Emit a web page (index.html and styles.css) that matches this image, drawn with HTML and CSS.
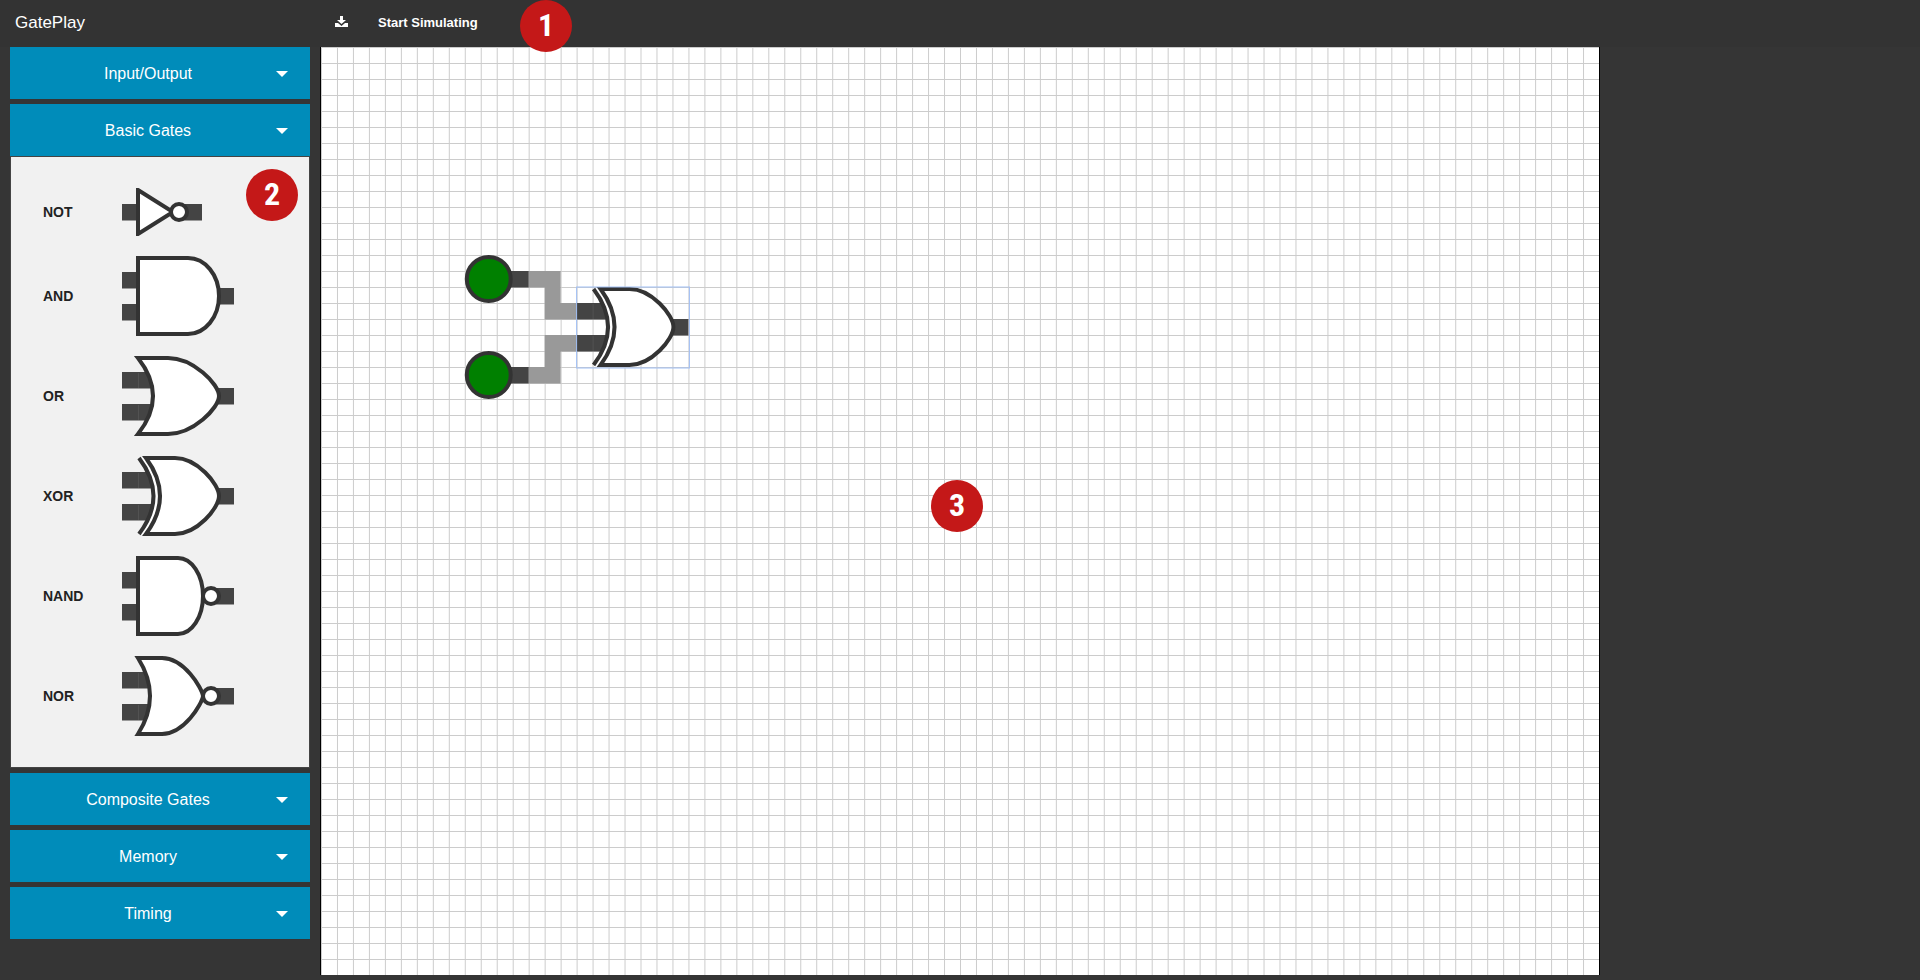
FILE: index.html
```html
<!DOCTYPE html>
<html lang="en">
<head>
<meta charset="utf-8">
<title>GatePlay</title>
<link rel="stylesheet" href="styles.css">
</head>
<body>
<svg class="defs" width="0" height="0" aria-hidden="true">
  <defs>
    <g id="pins-in"><path class="pin" d="M0 16H17V32.500H0zM0 48H17V64.500H0z"/></g>
    <g id="pins-in-long"><path class="pin" d="M0 16H32V32.500H0zM0 48H32V64.500H0z"/><path class="seam" d="M16.500 17V32M16.500 49V64"/></g>
    <g id="gate-xor">
      <use href="#pins-in-long"/>
      <path class="pin" d="M96 32H112V48.500H96z"/>
      <path class="gap" d="M17 2Q46 40 17 78H25Q52 40 25 2z"/>
      <path class="line" d="M17 2Q46 40 17 78"/>
      <path class="body" d="M24 2H53C75 2 97 28 97 40S75 78 53 78H24Q52 40 24 2z"/>
    </g>
  </defs>
</svg>

<header class="topbar">
  <a class="brand" href="#">GatePlay</a>
  <nav class="tools">
    <button class="tool" type="button" aria-label="Download">
      <svg width="13" height="11" viewBox="0 0 13 11"><path fill="#fff" d="M5 0h3v4h3L6.500 8 2 4h3zM0 7h3l3.500 3L10 7h3v4H0z"/></svg>
    </button>
    <button class="tool" type="button">Start Simulating</button>
    <span class="badge badge-bar">1</span>
  </nav>
</header>

<main class="workspace">
  <aside class="sidebar">
    <button class="group" type="button">Input/Output</button>
    <section class="open-group">
      <button class="group" type="button" aria-expanded="true">Basic Gates</button>
      <ul class="gates">
        <li class="gate"><span>NOT</span>
          <svg width="80" height="48" viewBox="0 0 80 48"><path class="pin" d="M0 16H17V32.500H0zM54 16H80V32.500H54z"/><path class="body" d="M16 2L51 24L16 46z"/><circle class="body" cx="57" cy="24" r="8"/></svg></li>
        <li class="gate"><span>AND</span>
          <svg width="112" height="80" viewBox="0 0 112 80"><use href="#pins-in"/><path class="pin" d="M96 32H112V48.500H96z"/><path class="body" d="M16 2H66A31 38 0 0 1 66 78H16z"/></svg></li>
        <li class="gate"><span>OR</span>
          <svg width="112" height="80" viewBox="0 0 112 80"><use href="#pins-in-long"/><path class="pin" d="M96 32H112V48.500H96z"/><path class="body" d="M16 2H46C71 2 97 28 97 40S71 78 46 78H16Q46 40 16 2z"/></svg></li>
        <li class="gate"><span>XOR</span>
          <svg width="112" height="80" viewBox="0 0 112 80"><use href="#gate-xor"/></svg></li>
        <li class="gate"><span>NAND</span>
          <svg width="112" height="80" viewBox="0 0 112 80"><use href="#pins-in"/><path class="pin" d="M94 32H112V48.500H94z"/><path class="body" d="M16 2H56A25 38 0 0 1 56 78H16z"/><circle class="body" cx="89" cy="40" r="8"/></svg></li>
        <li class="gate"><span>NOR</span>
          <svg width="112" height="80" viewBox="0 0 112 80"><use href="#pins-in-long"/><path class="pin" d="M94 32H112V48.500H94z"/><path class="body" d="M16 2H40C62 2 80 32 81 40C80 48 62 78 40 78H16Q40 40 16 2z"/><circle class="body" cx="89" cy="40" r="8"/></svg></li>
      </ul>
      <span class="badge badge-panel">2</span>
    </section>
    <button class="group" type="button">Composite Gates</button>
    <button class="group" type="button">Memory</button>
    <button class="group" type="button">Timing</button>
  </aside>

  <section class="board" aria-label="Circuit canvas">
    <svg class="circuit" viewBox="0 0 1280 928" preserveAspectRatio="none">
      <defs>
        <pattern id="grid" width="16" height="16" patternUnits="userSpaceOnUse">
          <path fill="#ccc" d="M0 0H16V1H1V16H0z"/>
        </pattern>
      </defs>
      <rect width="1280" height="928" fill="url(#grid)"/>
      <path class="wire" d="M208 224H240V256H256V272.500H224V240.500H208z"/>
      <path class="wire" d="M208 336.500H240V304.500H256V288H224V320H208z"/>
      <path class="pin" d="M188 224H208V240.500H188zM188 320H208V336.500H188z"/>
      <circle class="source" cx="168" cy="232" r="22"/>
      <circle class="source" cx="168" cy="328" r="22"/>
      <use href="#gate-xor" x="256" y="240"/>
      <rect class="selection" x="256" y="240" width="113" height="81"/>
    </svg>
    <span class="badge badge-board">3</span>
  </section>
</main>
</body>
</html>
```
FILE: styles.css
```css
* { box-sizing: border-box; }

body {
  margin: 0;
  min-height: 100vh;
  background: #353535;
  color: #fff;
  font-family: "Liberation Sans", Arial, sans-serif;
}

button {
  border: 0;
  margin: 0;
  color: #fff;
  font-family: inherit;
  cursor: pointer;
}

.defs { position: absolute; }

.topbar {
  display: flex;
  height: 47px;
  padding-bottom: 2px;
  background: #333;
}

.brand {
  width: 16.6667%;
  padding-left: 15px;
  color: #fff;
  font-size: 17px;
  line-height: 45px;
  text-decoration: none;
}

.tools {
  position: relative;
  display: flex;
}

.tool {
  padding: 0 15px;
  background: none;
  font-size: 13px;
  font-weight: bold;
  line-height: 45px;
}

.badge {
  position: absolute;
  z-index: 1;
  width: 52px;
  height: 52px;
  border-radius: 50%;
  background: #c41818;
  font-family: "Roboto Condensed", Roboto, sans-serif;
  font-size: 32px;
  font-weight: bold;
  line-height: 50px;
  text-align: center;
}

.badge-bar { top: 0; left: 200px; }
.badge-panel { top: 65px; right: 12px; }
.badge-board { top: 433px; left: 610px; }

.workspace {
  display: flex;
  align-items: flex-start;
}

.sidebar {
  display: flex;
  flex-direction: column;
  gap: 5px;
  width: 16.6667%;
  padding: 0 10px;
}

.group {
  position: relative;
  display: block;
  width: 100%;
  height: 52px;
  padding: 1px 40px 0 16px;
  background: #008cba;
  font-size: 16px;
  text-align: center;
}

.group::after {
  content: "";
  position: absolute;
  top: 24px;
  right: 22px;
  border: 6px solid transparent;
  border-top-color: #fff;
  border-bottom: 0;
}

.open-group { position: relative; }

.gates {
  display: flex;
  flex-direction: column;
  gap: 20px;
  margin: 0;
  padding: 31px 32px;
  border: 1px solid #444;
  background: #f1f1f1;
  color: #222;
  list-style: none;
}

.gate {
  display: grid;
  grid-template-columns: 79px auto;
  align-items: center;
  font-size: 14px;
  font-weight: bold;
}

.gate svg { display: block; }

.board {
  position: relative;
  width: 66.6667%;
  border: solid #000;
  border-width: 0 1px;
  background: #fff;
}

.circuit {
  display: block;
  width: 100%;
  height: 928px;
}

.pin { fill: #444; }
.seam { fill: none; stroke: #525252; }
.gap { fill: #fff; }
.body { fill: #fff; stroke: #333; stroke-width: 4; }
.line { fill: none; stroke: #333; stroke-width: 4; }
.wire { fill: #999; }
.source { fill: #008000; stroke: #333; stroke-width: 4; }
.selection { fill: none; stroke: #a0bff5; stroke-width: 1; }
```
